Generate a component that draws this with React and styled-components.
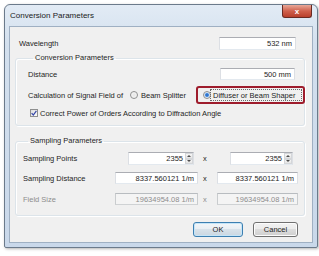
import React from "react";
import styled, { createGlobalStyle } from "styled-components";

const GlobalStyle = createGlobalStyle`
  html, body {
    margin: 0;
    padding: 0;
    background: #ffffff;
  }
  body {
    font-family: "Liberation Sans", Arial, sans-serif;
    font-size: 7.5px;
    color: #1e1e1e;
  }
`;

const Page = styled.div`
  width: 319px;
  height: 256px;
  padding: 4px 0 0 4px;
  box-sizing: border-box;
`;

const Window = styled.div`
  width: 314px;
  height: 244px;
  box-sizing: border-box;
  display: flex;
  flex-direction: column;
  padding: 0 4px 4px 4px;
  border: 1px solid #6b7a8b;
  border-radius: 6px 6px 2px 2px;
  background: linear-gradient(#e2ebf5, #d3e0ee 40px, #c9d8ea);
  box-shadow: 1px 1px 3px rgba(0, 0, 0, 0.3);
`;

const TitleBar = styled.div`
  height: 21px;
  display: flex;
  justify-content: space-between;
  align-items: center;
`;

const Title = styled.span`
  padding-left: 1px;
  font-size: 8px;
  color: #1b1b1b;
`;

const CloseButton = styled.div`
  align-self: flex-start;
  width: 30px;
  height: 13px;
  margin-right: 1px;
  box-sizing: border-box;
  display: flex;
  align-items: center;
  justify-content: center;
  border: 1px solid #6a2a22;
  border-top: none;
  border-radius: 0 0 3px 3px;
  background: linear-gradient(#e9a898, #d0614d 50%, #b9402c);
  color: #ffffff;
  font-size: 8px;
  font-weight: bold;
`;

const Client = styled.div`
  flex: 1;
  display: flex;
  flex-direction: column;
  padding: 10px 7px 5px 5px;
  border: 1px solid #9fb0c3;
  background: #f0f0f0;
`;

const Row = styled.div`
  display: flex;
  align-items: center;
  height: ${(p) => p.$h || 13}px;
  margin-top: ${(p) => p.$mt || 0}px;
  padding-left: ${(p) => p.$pl || 0}px;
  padding-right: ${(p) => p.$pr || 0}px;
`;

const Label = styled.span`
  flex: ${(p) => (p.$w ? "none" : "1")};
  width: ${(p) => (p.$w ? `${p.$w}px` : "auto")};
  color: ${(p) => (p.$disabled ? "#8d8d8d" : "#1e1e1e")};
  white-space: nowrap;
`;

const TextBox = styled.div`
  width: ${(p) => p.$w}px;
  height: ${(p) => p.$h || 12}px;
  margin-left: ${(p) => p.$ml || 0}px;
  box-sizing: border-box;
  display: flex;
  align-items: center;
  justify-content: flex-end;
  padding-right: 3px;
  border: 1px solid ${(p) => (p.$disabled ? "#b8bcc0" : "#abadb3")};
  border-left-color: ${(p) => (p.$disabled ? "#c9ccce" : "#dcdfe4")};
  border-right-color: ${(p) => (p.$disabled ? "#c9ccce" : "#dcdfe4")};
  border-bottom-color: ${(p) => (p.$disabled ? "#cfd2d4" : "#e3e9ef")};
  background: ${(p) => (p.$disabled ? "#f4f4f4" : "#ffffff")};
  color: ${(p) => (p.$disabled ? "#8d8d8d" : "#1e1e1e")};
  white-space: nowrap;
`;

const GroupBox = styled.fieldset`
  margin: ${(p) => p.$mt || 0}px 0 0 0;
  padding: 0 ${(p) => p.$pr || 0}px ${(p) => p.$pb || 0}px ${(p) => p.$pl || 0}px;
  border: 1px solid #dce4ea;
  border-radius: 3px;
  box-shadow: inset 1px 1px 0 #ffffff, 1px 1px 0 #ffffff;
  min-width: 0;
`;

const Legend = styled.legend`
  margin-left: 5px;
  padding: 0 2px;
  line-height: 10px;
  height: 10px;
  color: #1e1e1e;
`;

const RadioDot = styled.span`
  flex: none;
  width: 8px;
  height: 8px;
  box-sizing: border-box;
  border-radius: 50%;
  border: 1px solid #8e8f8f;
  background: ${(p) =>
    p.$checked
      ? "radial-gradient(circle, #1f5fb8 0, #4d8fe0 1.6px, #d7e6f6 2.4px, #f4f4f4 4px)"
      : "radial-gradient(circle, #e6e6e6 0, #f5f5f5 3px)"};
  margin-right: ${(p) => p.$mr || 0}px;
`;

const Highlight = styled.div`
  margin-left: auto;
  margin-right: -10px;
  width: 109px;
  height: 18px;
  box-sizing: border-box;
  display: flex;
  align-items: center;
  padding-left: 5px;
  border: 2px solid #9e1c2c;
  border-radius: 3px;
`;

const FocusLabel = styled.span`
  margin-left: -1px;
  width: 92px;
  height: 12px;
  box-sizing: border-box;
  display: flex;
  align-items: center;
  padding-left: 2px;
  border: 1px dotted #6a6a6a;
  white-space: nowrap;
`;

const CheckBox = styled.span`
  flex: none;
  width: 8px;
  height: 8px;
  box-sizing: border-box;
  margin: 0 2px 0 2px;
  border: 1px solid #8e8f8f;
  background: linear-gradient(135deg, #dedede, #fbfbfb);
  display: flex;
  align-items: center;
  justify-content: center;
`;

const GridRow = styled.div`
  display: grid;
  grid-template-columns: 92px 83px 19px 81px;
  align-items: center;
  height: ${(p) => p.$h || 12}px;
  margin-top: ${(p) => p.$mt || 0}px;
`;

const Times = styled.span`
  padding-left: 5px;
  color: ${(p) => (p.$disabled ? "#8d8d8d" : "#1e1e1e")};
`;

const SpinBox = styled.div`
  width: ${(p) => p.$w}px;
  height: 13px;
  margin-left: ${(p) => p.$ml || 0}px;
  box-sizing: border-box;
  display: flex;
  border: 1px solid #abadb3;
  border-left-color: #dcdfe4;
  border-right-color: #dcdfe4;
  border-bottom-color: #e3e9ef;
  background: #ffffff;
`;

const SpinValue = styled.span`
  flex: 1;
  display: flex;
  align-items: center;
  justify-content: flex-end;
  padding-right: 2px;
`;

const SpinButtons = styled.div`
  width: 8px;
  display: flex;
  flex-direction: column;
`;

const SpinArrow = styled.div`
  flex: 1;
  display: flex;
  align-items: center;
  justify-content: center;
  border: 1px solid #d4d6d9;
  background: linear-gradient(#f6f6f6, #e4e4e4);
  &::after {
    content: "";
    border-left: 2px solid transparent;
    border-right: 2px solid transparent;
    ${(p) =>
      p.$up ? "border-bottom: 2px solid #4d4d4d;" : "border-top: 2px solid #4d4d4d;"}
  }
`;

const ButtonRow = styled.div`
  display: flex;
  justify-content: flex-end;
  gap: 10px;
  margin-top: 6px;
  padding-right: 7px;
`;

const Button = styled.div`
  width: ${(p) => p.$w}px;
  height: 15px;
  box-sizing: border-box;
  display: flex;
  align-items: center;
  justify-content: center;
  border: 1px solid ${(p) => (p.$default ? "#3c7fb1" : "#707070")};
  border-radius: 3px;
  background: ${(p) =>
    p.$default
      ? "linear-gradient(#f3f6f9 0, #e8eef3 50%, #d8e2ea 50%, #cbd7e1 100%)"
      : "linear-gradient(#f2f2f2 0, #ebebeb 50%, #dddddd 50%, #cfcfcf 100%)"};
  box-shadow: inset 0 0 0 1px ${(p) => (p.$default ? "#c5e5f8" : "#fcfcfc")};
  color: #1e1e1e;
`;

const Spin = ({ value, w, ml }) => (
  <SpinBox $w={w} $ml={ml}>
    <SpinValue>{value}</SpinValue>
    <SpinButtons>
      <SpinArrow $up />
      <SpinArrow />
    </SpinButtons>
  </SpinBox>
);

const Check = () => (
  <svg width="6" height="6" viewBox="0 0 6 6">
    <path d="M0.6 3.2 L2.3 5 L5.4 0.8" fill="none" stroke="#3547a8" strokeWidth="1.2" />
  </svg>
);

const App = () => (
  <Page>
    <GlobalStyle />
    <Window>
      <TitleBar>
        <Title>Conversion Parameters</Title>
        <CloseButton>x</CloseButton>
      </TitleBar>
      <Client>
        <Row $h={13} $pl={4} $pr={9}>
          <Label>Wavelength</Label>
          <TextBox $w={77} $h={13}>532 nm</TextBox>
        </Row>

        <GroupBox $mt={3} $pl={12} $pr={9} $pb={5}>
          <Legend>Conversion Parameters</Legend>
          <Row $h={12} $mt={5}>
            <Label>Distance</Label>
            <TextBox $w={75}>500 mm</TextBox>
          </Row>
          <Row $h={18} $mt={6}>
            <Label $w={102}>Calculation of Signal Field of</Label>
            <RadioDot $mr={3} />
            <span>Beam Splitter</span>
            <Highlight>
              <RadioDot $checked />
              <FocusLabel>Diffuser or Beam Shaper</FocusLabel>
            </Highlight>
          </Row>
          <Row $h={14} $mt={2}>
            <CheckBox>
              <Check />
            </CheckBox>
            <Label>Correct Power of Orders According to Diffraction Angle</Label>
          </Row>
        </GroupBox>

        <GroupBox $mt={10} $pl={7} $pb={10}>
          <Legend>Sampling Parameters</Legend>
          <GridRow $h={13} $mt={6}>
            <Label>Sampling Points</Label>
            <Spin value="2355" w={66} ml={13} />
            <Times>x</Times>
            <Spin value="2355" w={63} ml={13} />
          </GridRow>
          <GridRow $mt={7}>
            <Label>Sampling Distance</Label>
            <TextBox $w={83}>8337.560121 1/m</TextBox>
            <Times>x</Times>
            <TextBox $w={81}>8337.560121 1/m</TextBox>
          </GridRow>
          <GridRow $mt={9}>
            <Label $disabled>Field Size</Label>
            <TextBox $w={83} $disabled>19634954.08 1/m</TextBox>
            <Times $disabled>x</Times>
            <TextBox $w={81} $disabled>19634954.08 1/m</TextBox>
          </GridRow>
        </GroupBox>

        <ButtonRow>
          <Button $w={50} $default>OK</Button>
          <Button $w={45}>Cancel</Button>
        </ButtonRow>
      </Client>
    </Window>
  </Page>
);

export default App;
